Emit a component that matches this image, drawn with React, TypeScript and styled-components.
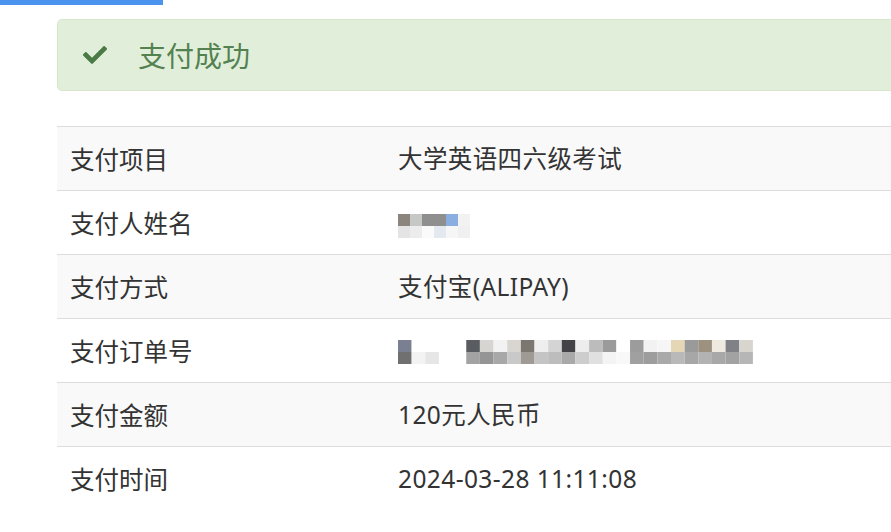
import styled, { createGlobalStyle } from "styled-components";
import { FaCheck } from "react-icons/fa";

const GlobalStyle = createGlobalStyle`
  html, body {
    margin: 0;
    padding: 0;
    background: #fff;
    overflow: hidden;
  }
  body {
    font-family: "Noto Sans", "Noto Sans CJK SC", sans-serif;
    color: #333;
  }
`;

type Cell = { c: string; w?: number };

// redacted values are shown as pixel mosaics, two rows of blocks
const nameMosaic: Cell[][] = [
  [{ c: "#8c857e" }, { c: "#c5c8c4" }, { c: "#8f8f8f", w: 2 }, { c: "#8aaee0" }, { c: "#f2f2f2" }],
  [{ c: "#e4e4e4" }, { c: "#ececec" }, { c: "#fafafa" }, { c: "#e3e9ef" }, { c: "#f6f6f6" }, { c: "#f0f0f0" }],
];

const orderMosaic: Cell[][] = [
  [
    { c: "#7a7f92" }, { c: "#fff" }, { c: "#fff" }, { c: "#fff" }, { c: "#fff" },
    { c: "#595d62" }, { c: "#d7d5d2" }, { c: "#f2f2f2" }, { c: "#d9d6d2" }, { c: "#7b766f" },
    { c: "#eeeeee" }, { c: "#d4d4d4" }, { c: "#424247" }, { c: "#ededed" }, { c: "#bcbcbc" },
    { c: "#9b9b9b" }, { c: "#fff" }, { c: "#9c9c9c" }, { c: "#f2f2f2" }, { c: "#f6f6f6" },
    { c: "#e5d7b5" }, { c: "#9a9a9a" }, { c: "#9d9180" }, { c: "#eeeae0" }, { c: "#7f8186" },
    { c: "#d8d5cf" },
  ],
  [
    { c: "#707070" }, { c: "#f3f3f3" }, { c: "#e6e6e6" }, { c: "#fff" }, { c: "#fff" },
    { c: "#a3a3a3" }, { c: "#959595" }, { c: "#a8a8a8" }, { c: "#c9c9c9" }, { c: "#a09a95" },
    { c: "#c4c4c4" }, { c: "#bdbdbd" }, { c: "#a9a9a9" }, { c: "#cdcdcd" }, { c: "#e0e0e0" },
    { c: "#f4f4f4" }, { c: "#f8f8f8" }, { c: "#a0a0a0" }, { c: "#9d9d9d" }, { c: "#a9a9a9" },
    { c: "#b9b9b9" }, { c: "#a7a7a7" }, { c: "#b2b2b2" }, { c: "#a8a8a8" }, { c: "#a2a2a2" },
    { c: "#b6b6b6" },
  ],
];

const Mosaic = ({ rows, cw, ch, shift = 0 }: { rows: Cell[][]; cw: number; ch: number; shift?: number }) => {
  const width = Math.max(...rows.map((r) => r.reduce((s, c) => s + (c.w ?? 1), 0))) * cw;
  return (
    <MosaicSvg width={width} height={rows.length * ch} $shift={shift}>
      {rows.map((r, y) => {
        let x = 0;
        return r.map((c, i) => {
          const w = (c.w ?? 1) * cw;
          const rect = <rect key={`${y}-${i}`} x={x} y={y * ch} width={w} height={ch} fill={c.c} />;
          x += w;
          return rect;
        });
      })}
    </MosaicSvg>
  );
};

const rows: { label: string; value: React.ReactNode }[] = [
  { label: "支付项目", value: "大学英语四六级考试" },
  { label: "支付人姓名", value: <Mosaic rows={nameMosaic} cw={12} ch={12} shift={6} /> },
  { label: "支付方式", value: "支付宝(ALIPAY)" },
  { label: "支付订单号", value: <Mosaic rows={orderMosaic} cw={13.65} ch={12} shift={2} /> },
  { label: "支付金额", value: "120元人民币" },
  { label: "支付时间", value: "2024-03-28 11:11:08" },
];

export default function App() {
  return (
    <>
      <GlobalStyle />
      <TopBar />
      <Page>
        <Alert>
          <FaCheck />
          <AlertText>支付成功</AlertText>
        </Alert>
        <Table>
          <tbody>
            {rows.map((r, i) => (
              <Row key={r.label} striped={i % 2 === 0}>
                <Label>{r.label}</Label>
                <Value>{r.value}</Value>
              </Row>
            ))}
          </tbody>
        </Table>
      </Page>
    </>
  );
}

const TopBar = styled.div`
  width: 163px;
  height: 5px;
  background: #4a94f0;
`;

const Page = styled.div`
  padding: 14px 0 0 57px;
  width: 1100px;
`;

const Alert = styled.div`
  display: flex;
  align-items: center;
  gap: 31px;
  padding: 15px 25px;
  height: 40px;
  background: #e1efda;
  border: 1px solid #d6e6cb;
  border-radius: 5px;
  color: #4a7a45;

  svg {
    font-size: 24px;
  }
`;

const AlertText = styled.span`
  font-family: "Noto Sans CJK SC", sans-serif;
  font-size: 28px;
  line-height: 40px;
  color: #548150;
`;

const Table = styled.table`
  margin-top: 35px;
  width: 100%;
  border-collapse: collapse;
  font-size: 24.5px;
  line-height: 32px;
`;

const Row = styled.tr<{ striped: boolean }>`
  height: 64px;
  background: ${(p) => (p.striped ? "#f9f9f9" : "#fff")};

  td {
    border-top: 1px solid #dddddd;
    padding: 0 13px;
    vertical-align: middle;
  }
`;

const Label = styled.td`
  width: 302px;
  font-family: "Noto Sans CJK SC", sans-serif;
`;

const Value = styled.td`
  font-family: "Noto Sans", "Noto Sans CJK SC", sans-serif;
  letter-spacing: 0.4px;
`;

const MosaicSvg = styled.svg<{ $shift: number }>`
  display: block;
  margin-top: ${(p) => p.$shift}px;
  filter: blur(0.6px);
`;
